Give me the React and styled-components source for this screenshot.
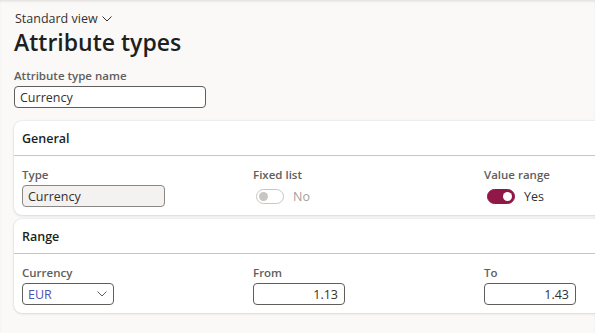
import React from 'react';
import styled, { createGlobalStyle } from 'styled-components';

const GlobalStyle = createGlobalStyle`
  body {
    margin: 0;
    background: #faf9f8;
    font-family: "Segoe UI", "Open Sans", "Liberation Sans", sans-serif;
    color: #323130;
    overflow: hidden;
  }
`;

const Page = styled.div`
  width: 595px;
  height: 333px;
  overflow: hidden;
  box-shadow: inset 0 2px 3px -1px rgba(0, 0, 0, 0.12);
  padding: 10px 0 0 14px;
  box-sizing: border-box;
`;

const ViewPicker = styled.div`
  display: flex;
  align-items: center;
  gap: 4px;
  font-size: 12.5px;
  line-height: 17px;
  padding-left: 1px;
  color: #323130;
`;

const Title = styled.h1`
  margin: 0;
  font-size: 23px;
  line-height: 30px;
  font-weight: 600;
  color: #201f1e;
`;

const Label = styled.div`
  font-size: 11.5px;
  line-height: 15px;
  font-weight: 600;
  color: #605e5c;
  margin-bottom: 3px;
`;

const NameField = styled.div`
  margin-top: 11px;
`;

const Input = styled.div`
  box-sizing: border-box;
  width: ${p => p.$width}px;
  height: 22px;
  border: 1px solid ${p => (p.$readOnly ? '#8a8886' : '#605e5c')};
  border-radius: 4px;
  background: ${p => (p.$readOnly ? '#f3f2f1' : '#fff')};
  display: flex;
  align-items: center;
  justify-content: ${p => (p.$align === 'right' ? 'flex-end' : 'space-between')};
  padding: 0 6px 0 5px;
  font-size: 12.5px;
  color: ${p => p.$color || '#323130'};
`;

const Cards = styled.div`
  margin-top: 13px;
  display: flex;
  flex-direction: column;
  gap: 4px;
`;

const Card = styled.section`
  width: 720px;
  background: #fff;
  border-radius: 8px;
  box-shadow: 0 0 2px rgba(0, 0, 0, 0.12), 0 1px 3px rgba(0, 0, 0, 0.1);
`;

const CardHeader = styled.div`
  height: 34px;
  display: flex;
  align-items: center;
  padding: 0 8px;
  font-size: 12.5px;
  font-weight: 600;
  color: #201f1e;
  border-bottom: 1px solid #c8c6c4;
`;

const CardBody = styled.div`
  display: grid;
  grid-template-columns: 231px 231px 231px;
  padding: 11px 8px 8px;
`;

const Field = styled.div`
  display: flex;
  flex-direction: column;
`;

const ToggleRow = styled.div`
  display: flex;
  align-items: center;
  gap: 9px;
  height: 22px;
  padding-left: 3px;
  font-size: 12.5px;
  color: ${p => (p.$on ? '#323130' : '#a19f9d')};
`;

const Track = styled.span`
  box-sizing: border-box;
  width: 28px;
  height: 15px;
  border-radius: 8px;
  display: flex;
  align-items: center;
  justify-content: ${p => (p.$on ? 'flex-end' : 'flex-start')};
  padding: 0 2px;
  background: ${p => (p.$on ? '#8f1847' : '#fff')};
  border: 1px solid ${p => (p.$on ? '#8f1847' : '#c8c6c4')};
`;

const Knob = styled.span`
  width: 9px;
  height: 9px;
  border-radius: 50%;
  background: ${p => (p.$on ? '#fff' : '#c8c6c4')};
`;

const Chevron = ({ color = '#323130', size = 10 }) => (
  <svg width={size} height={size * 0.6} viewBox="0 0 10 6">
    <path d="M0.5 0.5 L5 5 L9.5 0.5" fill="none" stroke={color} strokeWidth="1" />
  </svg>
);

const Toggle = ({ on, text }) => (
  <ToggleRow $on={on}>
    <Track $on={on}><Knob $on={on} /></Track>
    {text}
  </ToggleRow>
);

export default function App() {
  return (
    <>
      <GlobalStyle />
      <Page>
        <ViewPicker>
          Standard view <Chevron />
        </ViewPicker>
        <Title>Attribute types</Title>
        <NameField>
          <Label>Attribute type name</Label>
          <Input $width={192}>Currency</Input>
        </NameField>
        <Cards>
          <Card>
            <CardHeader>General</CardHeader>
            <CardBody>
              <Field>
                <Label>Type</Label>
                <Input $width={143} $readOnly>Currency</Input>
              </Field>
              <Field>
                <Label>Fixed list</Label>
                <Toggle on={false} text="No" />
              </Field>
              <Field>
                <Label>Value range</Label>
                <Toggle on text="Yes" />
              </Field>
            </CardBody>
          </Card>
          <Card>
            <CardHeader>Range</CardHeader>
            <CardBody>
              <Field>
                <Label>Currency</Label>
                <Input $width={92} $color="#4f52b2">
                  EUR <Chevron color="#605e5c" />
                </Input>
              </Field>
              <Field>
                <Label>From</Label>
                <Input $width={92} $align="right">1.13</Input>
              </Field>
              <Field>
                <Label>To</Label>
                <Input $width={92} $align="right">1.43</Input>
              </Field>
            </CardBody>
          </Card>
        </Cards>
      </Page>
    </>
  );
}
